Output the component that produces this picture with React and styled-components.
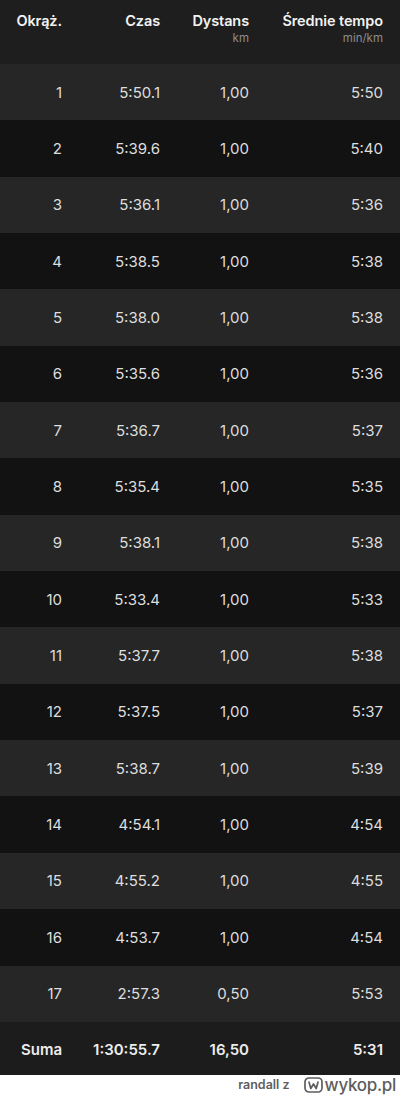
import styled, { createGlobalStyle } from 'styled-components'

const GlobalStyle = createGlobalStyle`
  body {
    margin: 0;
    background: #ffffff;
    font-family: Inter, "Noto Sans", "Liberation Sans", sans-serif;
    -webkit-font-smoothing: antialiased;
  }
`

const laps = [
  ['1', '5:50.1', '1,00', '5:50'],
  ['2', '5:39.6', '1,00', '5:40'],
  ['3', '5:36.1', '1,00', '5:36'],
  ['4', '5:38.5', '1,00', '5:38'],
  ['5', '5:38.0', '1,00', '5:38'],
  ['6', '5:35.6', '1,00', '5:36'],
  ['7', '5:36.7', '1,00', '5:37'],
  ['8', '5:35.4', '1,00', '5:35'],
  ['9', '5:38.1', '1,00', '5:38'],
  ['10', '5:33.4', '1,00', '5:33'],
  ['11', '5:37.7', '1,00', '5:38'],
  ['12', '5:37.5', '1,00', '5:37'],
  ['13', '5:38.7', '1,00', '5:39'],
  ['14', '4:54.1', '1,00', '4:54'],
  ['15', '4:55.2', '1,00', '4:55'],
  ['16', '4:53.7', '1,00', '4:54'],
  ['17', '2:57.3', '0,50', '5:53'],
]

const Page = styled.div`
  width: 400px;
  display: flex;
  flex-direction: column;
`

const Grid = styled.div`
  display: grid;
  grid-template-columns: 62px 98px 89px 134px;
  padding-right: 17px;
  text-align: right;
`

const Header = styled(Grid)`
  height: 64px;
  background: #1e1e1e;
  padding-top: 11px;
  box-sizing: border-box;
`

const HeadCell = styled.div`
  display: flex;
  flex-direction: column;
  align-items: flex-end;
`

const Title = styled.span`
  font-size: 14.5px;
  font-weight: 600;
  line-height: 20px;
  color: #f2f2f2;
  letter-spacing: -0.1px;
`

const Unit = styled.span`
  font-size: 11.5px;
  line-height: 14px;
  color: #8c8c8c;
`

const Row = styled(Grid)`
  height: 56.35px;
  align-items: center;
  background: ${(p) => (p.$odd ? '#262626' : '#121212')};
  font-size: 15px;
  color: #dedede;
`

const TotalRow = styled(Grid)`
  height: 53px;
  align-items: center;
  background: #1c1c1c;
  font-size: 15px;
  font-weight: 600;
  color: #ececec;
  padding-top: 2px;
  box-sizing: border-box;
`

const Footer = styled.div`
  height: 20px;
  display: flex;
  align-items: center;
  justify-content: flex-end;
  gap: 5px;
  padding-right: 4px;
  color: #5e5e5e;
`

const Author = styled.span`
  font-size: 12.5px;
  font-weight: 600;
  margin-right: 9px;
`

const Logo = styled.span`
  display: flex;
  align-items: center;
  gap: 2px;
  font-size: 17px;
  font-weight: 500;
  letter-spacing: -0.3px;
`

const LogoMark = styled.svg`
  width: 19px;
  height: 16px;
`

export default function App() {
  return (
    <Page>
      <GlobalStyle />
      <Header>
        <HeadCell><Title>Okrąż.</Title></HeadCell>
        <HeadCell><Title>Czas</Title></HeadCell>
        <HeadCell><Title>Dystans</Title><Unit>km</Unit></HeadCell>
        <HeadCell><Title>Średnie tempo</Title><Unit>min/km</Unit></HeadCell>
      </Header>
      {laps.map((lap, i) => (
        <Row key={lap[0]} $odd={i % 2 === 0}>
          {lap.map((v, j) => <div key={j}>{v}</div>)}
        </Row>
      ))}
      <TotalRow>
        <div>Suma</div>
        <div>1:30:55.7</div>
        <div>16,50</div>
        <div>5:31</div>
      </TotalRow>
      <Footer>
        <Author>randall z</Author>
        <Logo>
          <LogoMark viewBox="0 0 19 16">
            <rect x="1" y="1" width="17" height="14" rx="4" fill="none" stroke="#5e5e5e" strokeWidth="1.7" />
            <path d="M5 5 L6.8 11.5 L9.5 7 L12.2 11.5 L14 5" fill="none" stroke="#5e5e5e" strokeWidth="1.7" strokeLinejoin="round" strokeLinecap="round" />
          </LogoMark>
          wykop.pl
        </Logo>
      </Footer>
    </Page>
  )
}
